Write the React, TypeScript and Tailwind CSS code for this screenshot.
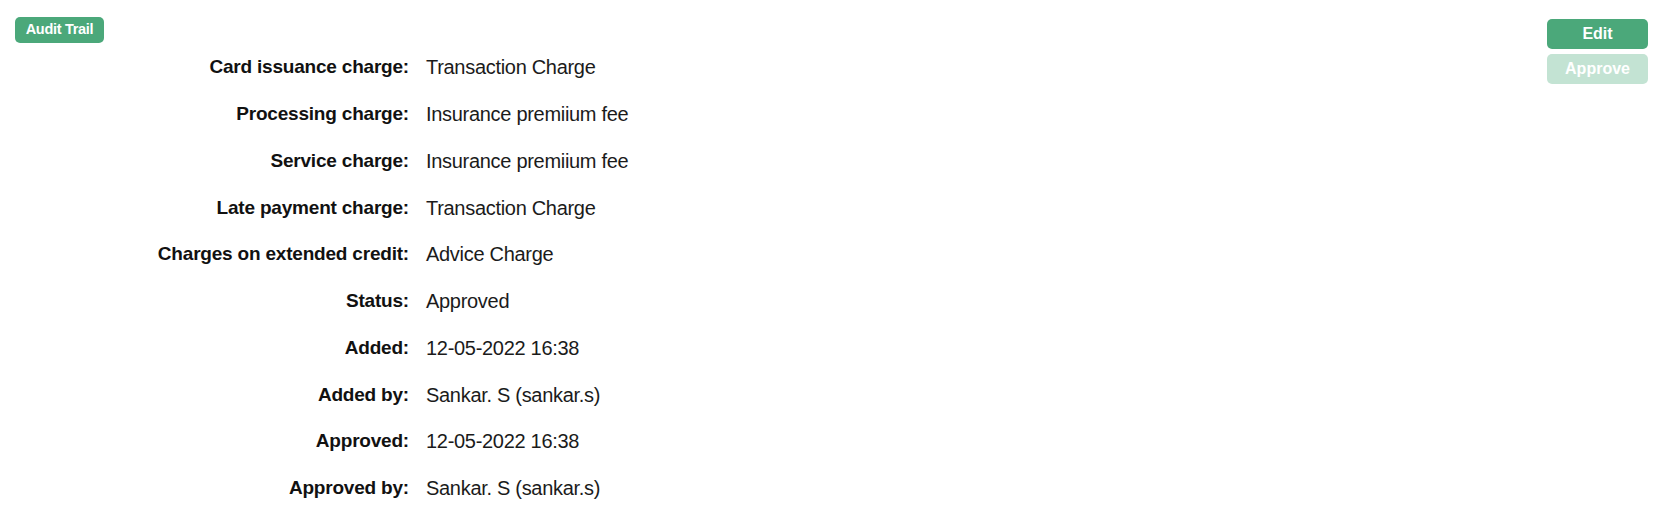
const rows: [string, string][] = [
  ["Card issuance charge:", "Transaction Charge"],
  ["Processing charge:", "Insurance premiium fee"],
  ["Service charge:", "Insurance premiium fee"],
  ["Late payment charge:", "Transaction Charge"],
  ["Charges on extended credit:", "Advice Charge"],
  ["Status:", "Approved"],
  ["Added:", "12-05-2022 16:38"],
  ["Added by:", "Sankar. S (sankar.s)"],
  ["Approved:", "12-05-2022 16:38"],
  ["Approved by:", "Sankar. S (sankar.s)"],
];

export default function App() {
  return (
    <div className="flex min-h-[514px] justify-between bg-white font-['Liberation_Sans',Arial,sans-serif] text-[#1b1b1b]">
      <div className="flex flex-col pl-[15px] pt-[17px]">
        <span className="flex h-[26px] w-[89px] items-center justify-center rounded-[5px] bg-[#4ba87a] text-[14.5px] font-bold tracking-[-0.3px] text-white">
          Audit Trail
        </span>
        <dl className="mt-px flex flex-col">
          {rows.map(([label, value]) => (
            <div key={label} className="flex h-[46.75px] items-center gap-[17px] leading-[28px]">
              <dt className="w-[394px] text-right text-[19px] font-bold tracking-[-0.2px] text-[#111]">{label}</dt>
              <dd className="text-[20px] tracking-[-0.3px]">{value}</dd>
            </div>
          ))}
        </dl>
      </div>
      <div className="flex flex-col gap-[5px] pr-[13px] pt-[19px]">
        <button
          type="button"
          className="h-[30px] w-[101px] rounded-[5px] bg-[#4ba87a] text-[16px] font-bold text-white"
        >
          Edit
        </button>
        <button
          type="button"
          disabled
          className="h-[30px] w-[101px] rounded-[5px] bg-[#c3e3d3] text-[16px] font-bold text-white"
        >
          Approve
        </button>
      </div>
    </div>
  );
}
